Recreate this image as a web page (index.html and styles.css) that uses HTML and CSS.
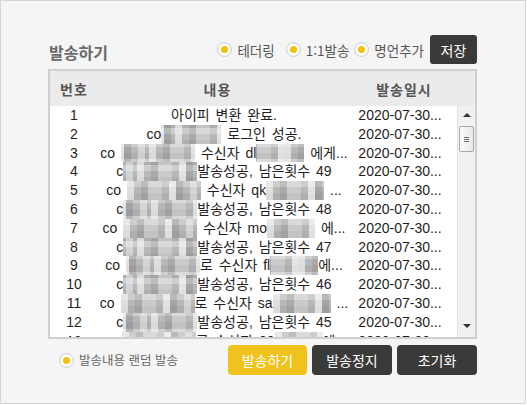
FILE: index.html
```html
<!DOCTYPE html>
<html lang="ko">
<head>
<meta charset="utf-8">
<title>발송하기</title>
<link rel="stylesheet" href="styles.css">
</head>
<body>
<div class="frame">
  <div class="panel">
    <div class="toolbar">
      <h1 class="title">발송하기</h1>
      <div class="options">
        <label class="radio opt-a"><span class="dot"></span>테더링</label>
        <label class="radio opt-b"><span class="dot"></span>1:1발송</label>
        <label class="radio opt-c"><span class="dot"></span>명언추가</label>
        <button class="btn btn-dark btn-save">저장</button>
      </div>
    </div>

    <div class="grid">
      <div class="grid-head">
        <div class="h-no">번호</div>
        <div class="h-msg">내용</div>
        <div class="h-date">발송일시</div>
      </div>
      <div class="grid-body">
        <div class="rows">
          <div class="row"><span class="c-no">1</span><span class="c-msg">아이피 변환 완료.</span><span class="c-date">2020-07-30...</span></div>
          <div class="row"><span class="c-no">2</span><span class="c-msg">co<span class="mz mz-b"></span> 로그인 성공.</span><span class="c-date">2020-07-30...</span></div>
          <div class="row"><span class="c-no">3</span><span class="c-msg">co <span class="mz mz-a"></span> 수신자 dl<span class="mz mz-c"></span> 에게...</span><span class="c-date">2020-07-30...</span></div>
          <div class="row"><span class="c-no">4</span><span class="c-msg">c<span class="mz mz-a"></span>발송성공, 남은횟수 49</span><span class="c-date">2020-07-30...</span></div>
          <div class="row"><span class="c-no">5</span><span class="c-msg">co <span class="mz mz-a"></span> 수신자 qk<span class="mz mz-d"></span> ...</span><span class="c-date">2020-07-30...</span></div>
          <div class="row"><span class="c-no">6</span><span class="c-msg">c<span class="mz mz-a"></span>발송성공, 남은횟수 48</span><span class="c-date">2020-07-30...</span></div>
          <div class="row"><span class="c-no">7</span><span class="c-msg">co <span class="mz mz-a"></span> 수신자 mo<span class="mz mz-c"></span> 에...</span><span class="c-date">2020-07-30...</span></div>
          <div class="row"><span class="c-no">8</span><span class="c-msg">c<span class="mz mz-a"></span>발송성공, 남은횟수 47</span><span class="c-date">2020-07-30...</span></div>
          <div class="row"><span class="c-no">9</span><span class="c-msg">co <span class="mz mz-a"></span>로 수신자 fl<span class="mz mz-c"></span>에...</span><span class="c-date">2020-07-30...</span></div>
          <div class="row"><span class="c-no">10</span><span class="c-msg">c<span class="mz mz-a"></span>발송성공, 남은횟수 46</span><span class="c-date">2020-07-30...</span></div>
          <div class="row"><span class="c-no">11</span><span class="c-msg">co <span class="mz mz-a"></span>로 수신자 sa<span class="mz mz-d"></span> ...</span><span class="c-date">2020-07-30...</span></div>
          <div class="row"><span class="c-no">12</span><span class="c-msg">c<span class="mz mz-a"></span>발송성공, 남은횟수 45</span><span class="c-date">2020-07-30...</span></div>
          <div class="row"><span class="c-no">13</span><span class="c-msg">co <span class="mz mz-a"></span>로 수신자 00<span class="mz mz-c"></span>에...</span><span class="c-date">2020-07-30...</span></div>
        </div>
        <div class="scrollbar">
          <span class="arrow arrow-up"></span>
          <span class="thumb"><span class="grip"></span></span>
          <span class="track"></span>
          <span class="arrow arrow-down"></span>
        </div>
      </div>
    </div>

    <div class="footer">
      <label class="radio radio-small"><span class="dot"></span>발송내용 랜덤 발송</label>
      <div class="actions">
        <button class="btn btn-yellow btn-send">발송하기</button>
        <button class="btn btn-dark btn-wide">발송정지</button>
        <button class="btn btn-dark btn-wide">초기화</button>
      </div>
    </div>
  </div>
</div>
</body>
</html>
```

FILE: styles.css
```css
* { box-sizing: border-box; }

html, body {
  margin: 0;
  padding: 0;
  background: #ffffff;
}

body {
  font-family: "Noto Sans CJK KR", "Noto Sans", sans-serif;
}

.frame {
  width: 526px;
  height: 404px;
  border: 1px solid #cdd7de;
  background: #f5f5f5;
  padding: 34px 0 0 47px;
}

.panel {
  width: 429px;
}

/* ---------- toolbar ---------- */
.toolbar {
  height: 29px;
  display: flex;
  align-items: center;
  justify-content: space-between;
}

.title {
  margin: 0 0 0 1px;
  font-size: 16px;
  font-weight: bold;
  color: #6a6a6a;
  line-height: 20px;
  padding-top: 4px;
}

.options {
  display: flex;
  align-items: center;
  height: 29px;
}

.radio {
  display: flex;
  align-items: center;
  font-size: 13.5px;
  color: #555;
  line-height: 16px;
  white-space: nowrap;
}

.opt-a { margin-right: 11px; }
.opt-b { margin-right: 5px; }
.opt-c { margin-right: 6px; }

.dot {
  width: 15px;
  height: 15px;
  border-radius: 50%;
  border: 1px solid #cfcfcf;
  background: #ffffff;
  box-shadow: inset 0 0 0 1px #f2f2f2;
  position: relative;
  margin-right: 5px;
  flex: none;
}

.dot::after {
  content: "";
  position: absolute;
  left: 3px;
  top: 3px;
  width: 7px;
  height: 7px;
  border-radius: 50%;
  background: #f0c20a;
}

.btn {
  border: none;
  border-radius: 4px;
  color: #ffffff;
  font-family: "Noto Sans CJK KR", "Noto Sans", sans-serif;
  font-size: 14px;
  padding: 0;
  line-height: 1;
  cursor: pointer;
}

.btn-dark { background: #3a3a3a; }
.btn-yellow { background: #efc31b; }

.btn-save {
  width: 47px;
  height: 29px;
  border-radius: 3px;
}

/* ---------- grid ---------- */
.grid {
  margin-top: 5px;
  height: 270px;
  border: 2px solid #d0d0d0;
  background: #ffffff;
  display: flex;
  flex-direction: column;
}

.grid-head {
  height: 35px;
  background: #ebebeb;
  display: grid;
  grid-template-columns: 48px 239px 1fr;
  align-items: center;
  font-size: 14px;
  font-weight: bold;
  color: #555;
  letter-spacing: 1px;
  text-align: center;
  flex: none;
}

.h-date { padding-right: 4px; }

.grid-body {
  flex: 1;
  display: flex;
  overflow: hidden;
}

.rows {
  width: 407px;
  overflow: hidden;
  font-family: "Liberation Sans", "Noto Sans CJK KR", sans-serif;
  font-size: 14px;
  color: #1e1e1e;
}

.row {
  display: grid;
  grid-template-columns: 48px 252px 100px;
  height: 18.8px;
  line-height: 18.8px;
  white-space: nowrap;
}

.c-no { text-align: center; }
.c-msg {
  text-align: center;
  word-spacing: 2px;
  overflow: hidden;
}
.c-date { text-align: center; }

.mz {
  display: inline-block;
  height: 18.8px;
  vertical-align: top;
  background-color: #b8b8b8;
  background-image:
    linear-gradient(90deg,
      rgba(255,255,255,.55) 0 7px,
      transparent 7px 14px,
      rgba(0,0,0,.08) 14px 21px,
      rgba(255,255,255,.25) 21px 35px,
      transparent 35px 42px,
      rgba(255,255,255,.6) 42px 49px,
      rgba(0,0,0,.1) 49px 56px,
      transparent 56px 63px,
      rgba(255,255,255,.4) 63px 70px,
      transparent 70px),
    linear-gradient(180deg,
      rgba(255,255,255,.3) 0 6px,
      transparent 6px 12px,
      rgba(0,0,0,.05) 12px);
}

.row:nth-child(even) .mz { background-position: 14px 0, 0 3px; }
.row:nth-child(3n) .mz { background-position: 28px 0, 0 -3px; }

.mz-a { width: 74px; }
.mz-b { width: 60px; }
.mz-c { width: 48px; }
.mz-d { width: 58px; }

/* ---------- scrollbar ---------- */
.scrollbar {
  width: 18px;
  background: #f1f1f1;
  border-left: 1px solid #e2e2e2;
  display: flex;
  flex-direction: column;
  align-items: center;
  padding: 7px 0 9px;
}

.arrow {
  width: 0;
  height: 0;
  border-left: 4px solid transparent;
  border-right: 4px solid transparent;
  flex: none;
}

.arrow-up { border-bottom: 4px solid #333; }
.arrow-down { border-top: 4px solid #333; }

.thumb {
  margin-top: 9px;
  width: 15px;
  height: 26px;
  border: 1px solid #a9a9a9;
  border-radius: 2px;
  background: linear-gradient(90deg, #fbfbfb, #e8e8e8);
  display: flex;
  align-items: center;
  justify-content: center;
  flex: none;
}

.grip {
  width: 5px;
  height: 5px;
  border-top: 1px solid #6d6d6d;
  border-bottom: 1px solid #6d6d6d;
  position: relative;
}

.grip::after {
  content: "";
  position: absolute;
  left: 0;
  right: 0;
  top: 1px;
  height: 1px;
  background: #6d6d6d;
}

.track { flex: 1; }

/* ---------- footer ---------- */
.footer {
  margin-top: 6px;
  height: 30px;
  display: flex;
  align-items: center;
  justify-content: space-between;
  padding-left: 11px;
}

.radio-small {
  font-size: 12.5px;
  color: #666;
}

.actions {
  display: flex;
  gap: 5px;
}

.btn-send { width: 79px; height: 30px; }
.btn-wide { width: 80px; height: 30px; }
```
